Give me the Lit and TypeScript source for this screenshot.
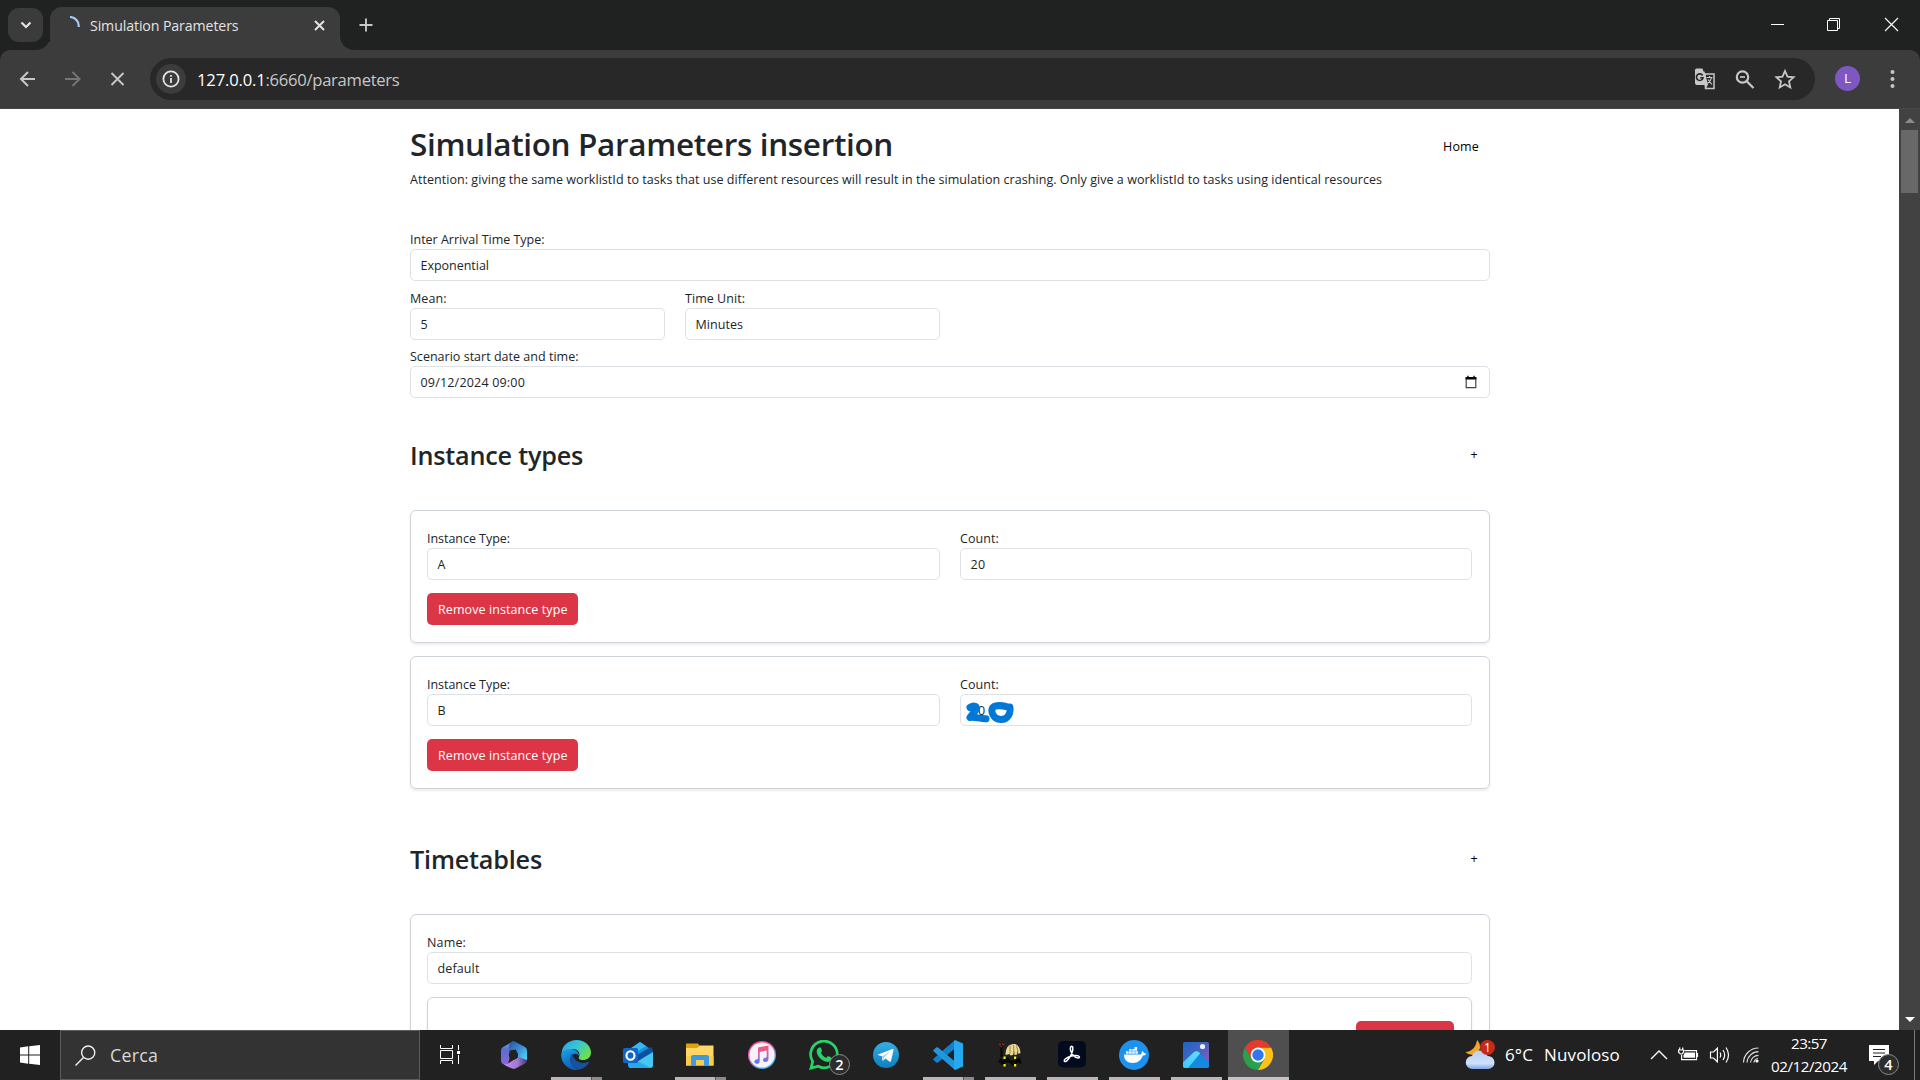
import { LitElement, html, css, svg, nothing } from "lit";
import { customElement, property } from "lit/decorators.js";

/** Tracks its text so that the run occupies exactly `w` pixels. */
@customElement("fit-text")
class FitText extends LitElement {
  @property({ type: Number }) w = 0;
  static styles = css`
    :host { display: inline-block; white-space: pre; }
  `;
  firstUpdated() {
    const range = document.createRange();
    range.selectNodeContents(this);
    const natural = range.getBoundingClientRect().width;
    const count = (this.textContent ?? "").length;
    if (this.w && count > 0) {
      this.style.letterSpacing = `${(this.w - natural) / count}px`;
    }
  }
  render() {
    return html`<slot></slot>`;
  }
}

const base = css`
  :host {
    display: block;
    box-sizing: border-box;
    font-family: "Open Sans", "Noto Sans", sans-serif;
  }
  * { box-sizing: border-box; }
  svg { display: block; flex: none; }
`;

@customElement("browser-chrome")
class BrowserChrome extends LitElement {
  static styles = [
    base,
    css`
      .strip {
        height: 50px;
        background: #202221;
        display: flex;
        padding-left: 8px;
        color: #e3e3e3;
      }
      .search-tabs {
        width: 35px;
        height: 34px;
        margin-top: 8px;
        border-radius: 11px;
        background: #3b3b3b;
        display: grid;
        place-items: center;
      }
      .tab {
        position: relative;
        margin: 7px 0 0 7px;
        width: 290px;
        height: 43px;
        border-radius: 12px 12px 0 0;
        background: #3c3c3c;
        display: flex;
        align-items: center;
        padding: 0 15px 6px 14px;
      }
      .tab::before,
      .tab::after {
        content: "";
        position: absolute;
        bottom: 0;
        width: 14px;
        height: 14px;
      }
      .tab::before {
        left: -14px;
        width: 14px;
        height: 8px;
        background: radial-gradient(circle at 0 -6px, #202221 13.5px, #3c3c3c 14.5px);
      }
      .tab::after {
        right: -14px;
        background: radial-gradient(circle at 100% 0, #202221 13.5px, #3c3c3c 14.5px);
      }
      .title { flex: 1; margin: 1px 0 0 6px; font-size: 14.2px; line-height: 24px; }
      .new-tab { margin: 18px 0 0 19px; }
      .window { margin-left: auto; display: flex; margin-top: 17px; padding-right: 21px; gap: 42px; }
      .bar {
        height: 59px;
        background: #202221;
      }
      .toolbar {
        height: 59px;
        background: #3c3c3c;
        border-bottom: 1px solid #474747;
        border-radius: 10px 10px 0 0;
        display: flex;
        align-items: center;
        padding: 0 17px 1px 18px;
        color: #c7c7c7;
      }
      .nav { display: flex; gap: 25px; width: 132px; }
      .omnibox {
        width: 1665px;
        height: 42px;
        border-radius: 21px;
        background: #282828;
        display: flex;
        align-items: center;
        padding: 0 19px 0 6px;
      }
      .info {
        width: 30px;
        height: 30px;
        border-radius: 50%;
        background: #3c3c3c;
        display: grid;
        place-items: center;
      }
      .url { margin: 2px 0 0 11px; flex: 1; font-size: 16.6px; line-height: 26px; color: #c7c7c7; }
      .host { color: #fff; }
      .actions { display: flex; gap: 18px; align-items: center; }
      .avatar {
        width: 25px;
        height: 25px;
        border-radius: 50%;
        margin-left: 20px;
        background: #7e57c2;
        color: #fff;
        font-size: 13.5px;
        line-height: 25px;
        text-align: center;
      }
      .menu { margin-left: auto; }
    `,
  ];
  render() {
    return html`
      <div class="strip">
        <div class="search-tabs">
          <svg width="12" height="8" viewBox="0 0 12 8" fill="none" stroke="#e3e3e3" stroke-width="2.2"><path d="M1.5 1.5 6 6l4.500-4.500" /></svg>
        </div>
        <div class="tab">
          <svg width="20" height="20" viewBox="0 0 20 20" fill="none" stroke="#a8c7fa" stroke-width="2.200"><path d="M6 1A9 9 0 0 1 14.700 11" /></svg>
          <div class="title"><fit-text w="148.500">Simulation Parameters</fit-text></div>
          <svg width="11" height="11" viewBox="0 0 11 11" stroke="#e3e3e3" stroke-width="2"><path d="M1 1l9 9M10 1l-9 9" /></svg>
        </div>
        <svg class="new-tab" width="14" height="14" viewBox="0 0 14 14" stroke="#c7c7c7" stroke-width="1.900"><path d="M7 .5v13M.5 7h13" /></svg>
        <div class="window">
          <svg width="15" height="15" viewBox="0 0 15 15" stroke="#fff"><path d="M1 7.500h13" /></svg>
          <svg width="15" height="15" viewBox="0 0 15 15" stroke="#fff" fill="none"><path d="M.5 3.500h10v10h-10zM2.500 3.500v-2h10v10h-2" /></svg>
          <svg width="15" height="15" viewBox="0 0 15 15" stroke="#fff" stroke-width="1.100"><path d="M1 1l13 13M14 1 1 14" /></svg>
        </div>
      </div>
      <div class="bar">
        <div class="toolbar">
          <div class="nav">
            <svg width="20" height="20" viewBox="0 0 20 20" fill="none" stroke="#c7c7c7" stroke-width="2"><path d="M17 10H3.500M10 3 3 10l7 7" /></svg>
            <svg width="20" height="20" viewBox="0 0 20 20" fill="none" stroke="#757575" stroke-width="2"><path d="M2 10h13.500M9.500 3l7 7-7 7" /></svg>
            <svg width="20" height="20" viewBox="0 0 20 20" fill="none" stroke="#c7c7c7" stroke-width="1.900"><path d="M3.500 4l12 12M15.500 4l-12 12" /></svg>
          </div>
          <div class="omnibox">
            <div class="info">
              <svg width="18" height="18" viewBox="0 0 18 18" fill="none" stroke="#e3e3e3" stroke-width="1.800"><circle cx="9" cy="9" r="7.600" /><path d="M9 8v5M9 5v1.800" /></svg>
            </div>
            <div class="url"><fit-text class="host" w="68.500">127.0.0.1</fit-text><fit-text w="134">:6660/parameters</fit-text></div>
            <div class="actions">
              <svg width="22" height="22" viewBox="0 0 22 22">
                <path d="M11 6h9v14.500h-8.500z" fill="none" stroke="#c7c7c7" stroke-width="1.500" />
                <path d="M2.500 .5h6l1 3h1l3.500 13-2 4-1.500-3.500h-8a2 2 0 0 1-1.500-2v-13A2 2 0 0 1 2.500 .5z" fill="#c7c7c7" />
                <path d="M8.600 7.500A3.300 3.300 0 1 0 9 9.800H6.200" fill="none" stroke="#282828" stroke-width="1.600" />
                <path d="M12.500 9.500h6M15.500 8v1.500M17.500 9.500c-.5 3-2.500 5-4 6M14 11.500l4 5" fill="none" stroke="#c7c7c7" stroke-width="1.200" />
              </svg>
              <svg width="22" height="22" viewBox="0 0 22 22" fill="none" stroke="#c7c7c7" stroke-width="2.200"><circle cx="8.500" cy="9" r="5.700" /><path d="M12.500 13l7 7" /><path d="M6 9h5" stroke-width="1.700" /></svg>
              <svg width="22" height="22" viewBox="0 0 22 22" fill="none" stroke="#c7c7c7" stroke-width="1.800"><path d="M11 3l2.500 5.700 6.100.6-4.600 4.100 1.300 6L11 16.200l-5.300 3.200 1.300-6-4.600-4.100 6.100-.6z" /></svg>
            </div>
          </div>
          <div class="avatar">L</div>
          <svg class="menu" width="20" height="20" viewBox="0 0 20 20" fill="#c7c7c7"><circle cx="9.500" cy="3" r="2" /><circle cx="9.500" cy="10" r="2" /><circle cx="9.500" cy="17" r="2" /></svg>
        </div>
      </div>
    `;
  }
}

@customElement("form-field")
class FormField extends LitElement {
  @property() label = "";
  @property() value = "";
  @property({ type: Number }) lw = 0;
  @property({ type: Number }) vw = 0;
  @property({ type: Boolean }) date = false;
  @property({ type: Boolean }) scribble = false;
  static styles = [
    base,
    css`
      .label { display: block; height: 20px; padding-top: 1px; font-size: 12.500px; line-height: 20px; color: #212529; }
      .control {
        position: relative;
        height: 32px;
        border: 1px solid #dee2e6;
        border-radius: 5px;
        background: #fff;
        padding: 0 12px 0 9.500px;
        display: flex;
        align-items: center;
        justify-content: space-between;
        font-size: 12.500px;
        line-height: 28px;
        color: #212529;
      }
      fit-text { padding-top: 2px; }
      .label fit-text { padding-top: 0; }
      .scribble { position: absolute; left: 4px; top: 6px; }
    `,
  ];
  render() {
    return html`
      <div class="label"><fit-text .w=${this.lw}>${this.label}</fit-text></div>
      <div class="control">
        <fit-text .w=${this.vw}>${this.value}</fit-text>
        ${this.date
          ? html`<svg width="12" height="14" viewBox="0 0 12 14"><path d="M1.200 3h9.600v9.600H1.200z" fill="none" stroke="#444" stroke-width="1.200" /><path d="M.6 2h10.800v2.600H.6zM2.200.8h1.400V3H2.200zM8.400.8h1.400V3H8.400z" /></svg>`
          : nothing}
        ${this.scribble
          ? html`<svg class="scribble" width="52" height="24" viewBox="0 0 52 24" fill="none" stroke="#0078d7" stroke-width="7" stroke-linecap="round" stroke-linejoin="round">
              <path d="M5 6.500C8 4.500 12 4.500 11.500 7.500S8 12 5 16.500C9 15.500 14 17.500 21 17.800" />
              <path d="M41 5.500C36 4.300 30 4.500 27.800 6.500C25.500 10 28 18.500 35.500 18.500C43 18.800 46 12 44.800 6" />
            </svg>`
          : nothing}
      </div>
    `;
  }
}

interface InstanceType {
  name: string;
  nameWidth: number;
  scribble: boolean;
}

@customElement("parameters-page")
class ParametersPage extends LitElement {
  private instances: InstanceType[] = [
    { name: "A", nameWidth: 8.600, scribble: false },
    { name: "B", nameWidth: 7.600, scribble: true },
  ];
  static styles = [
    base,
    css`
      :host { background: #fff; color: #212529; overflow: hidden; }
      .viewport { display: flex; height: 921px; overflow: hidden; }
      .scroll { flex: 1; overflow: hidden; }
      .container { width: 1080px; margin-left: 410px; padding-top: 15px; }
      .head { display: flex; justify-content: space-between; height: 46px; }
      h1, h2, p { margin: 0; }
      h1 { font-size: 31.500px; font-weight: 600; line-height: 40px; }
      h2 { font-size: 25.200px; font-weight: 600; line-height: 32px; }
      .home { margin: 13px 11px 0 0; font-size: 12.500px; line-height: 20px; color: #000; }
      p { font-size: 12.500px; line-height: 20px; }
      .arrival { margin-top: 39px; }
      .quarter { display: grid; grid-template-columns: repeat(4, 1fr); column-gap: 20px; margin: 7px 0 6px; }
      .section { display: flex; justify-content: space-between; height: 32px; margin: 41px 0 39px; }
      .section.later { margin-top: 54px; }
      .plus { margin: 6px 11.500px 0 0; width: 8px; font-size: 12.500px; line-height: 20px; color: #000; }
      .card {
        border: 1px solid #ced4da;
        border-radius: 6px;
        padding: 17px 17px 17px 16px;
        box-shadow: 0 2px 3px rgba(0, 0, 0, 0.075);
      }
      .card + .card { margin-top: 13px; }
      .halves { display: grid; grid-template-columns: 513px 512px; column-gap: 20px; margin-bottom: 13px; }
      .danger {
        display: inline-flex;
        align-items: center;
        height: 32px;
        width: 151px;
        padding-left: 11px;
        border-radius: 5px;
        background: #dc3545;
        color: #fff;
        font-size: 12.500px;
      }
      .inner { margin-top: 13px; height: 200px; padding: 23px 17px; display: flex; justify-content: flex-end; }
      .inner .danger { width: 98px; }
      .track { width: 21px; background: #424242; display: flex; flex-direction: column; align-items: center; padding: 9px 0 8px; }
      .thumb { width: 17px; height: 63px; background: #686868; margin: 7px 0 auto; }
    `,
  ];
  render() {
    return html`
      <div class="viewport">
        <div class="scroll">
          <div class="container">
            <div class="head">
              <h1><fit-text w="483">Simulation Parameters insertion</fit-text></h1>
              <div class="home"><fit-text w="36">Home</fit-text></div>
            </div>
            <p><fit-text w="972">Attention: giving the same worklistId to tasks that use different resources will result in the simulation crashing. Only give a worklistId to tasks using identical resources</fit-text></p>
            <form-field class="arrival" label="Inter Arrival Time Type:" lw="134.500" value="Exponential" vw="68.500"></form-field>
            <div class="quarter">
              <form-field label="Mean:" lw="36.500" value="5" vw="7.200"></form-field>
              <form-field label="Time Unit:" lw="60" value="Minutes" vw="47.500"></form-field>
            </div>
            <form-field date label="Scenario start date and time:" lw="168.500" value="09/12/2024 09:00" vw="104.500"></form-field>
            <div class="section">
              <h2><fit-text w="173">Instance types</fit-text></h2>
              <div class="plus">+</div>
            </div>
            ${this.instances.map(
              (item) => html`
                <div class="card">
                  <div class="halves">
                    <form-field label="Instance Type:" lw="83" .value=${item.name} .vw=${item.nameWidth}></form-field>
                    <form-field label="Count:" lw="39" value="20" vw="14.800" .scribble=${item.scribble}></form-field>
                  </div>
                  <div class="danger"><fit-text w="129.500">Remove instance type</fit-text></div>
                </div>
              `
            )}
            <div class="section later">
              <h2><fit-text w="132">Timetables</fit-text></h2>
              <div class="plus">+</div>
            </div>
            <div class="card">
              <form-field label="Name:" lw="39" value="default" vw="42"></form-field>
              <div class="card inner"><div class="danger"></div></div>
            </div>
          </div>
        </div>
        <div class="track">
          <svg width="10" height="5" viewBox="0 0 10 5" fill="#8b8b8b"><path d="M0 5 5 0l5 5z" /></svg>
          <div class="thumb"></div>
          <svg width="10" height="5" viewBox="0 0 10 5" fill="#fff"><path d="M0 0h10L5 5z" /></svg>
        </div>
      </div>
    `;
  }
}

type AppState = "idle" | "open" | "stacked" | "active";

const apps: { state: AppState; badge?: string; art: unknown }[] = [
  {
    state: "idle",
    art: svg`
      <defs>
        <linearGradient id="m1" x1="0" y1="0" x2="0" y2="1"><stop offset="0" stop-color="#6fb0ea"/><stop offset=".35" stop-color="#5a6fd0"/><stop offset="1" stop-color="#8a68d8"/></linearGradient>
        <linearGradient id="m2" x1="0" y1="0" x2="1" y2="1"><stop offset="0" stop-color="#2a4f9c"/><stop offset=".5" stop-color="#3a8fd8"/><stop offset="1" stop-color="#4fe0fa"/></linearGradient>
        <linearGradient id="m3" x1="0" y1="0" x2="1" y2="0"><stop offset="0" stop-color="#c78af0"/><stop offset=".6" stop-color="#a07ad0"/><stop offset="1" stop-color="#4a3478"/></linearGradient>
      </defs>
      <path d="M14 1.500 4 7A4 4 0 0 0 2 10.500v10A4 4 0 0 0 4 24l3 1c2-2 3.500-4 3.500-7v-6c0-2 1-4 4-5z" fill="url(#m1)"/>
      <path d="M13 1.500c-4 3-4 6-2 9l6-1 2 8 9 3V10.500A4 4 0 0 0 26 7L16.500 2A4 4 0 0 0 13 1.500z" fill="url(#m2)"/>
      <path d="M4.500 24.500 13 28.600a5 5 0 0 0 3.500-.2L26 23.500a4 4 0 0 0 2-3.500L19.500 17 14.500 20c-3 2-6 4-10 4.500z" fill="url(#m3)"/>
      <circle cx="14.500" cy="15" r="4.600" fill="#222"/>`,
  },
  {
    state: "stacked",
    art: svg`
      <defs>
        <linearGradient id="e1" x1="0" y1="0" x2="1" y2=".6"><stop offset="0" stop-color="#2c9fe0"/><stop offset=".5" stop-color="#35c5d8"/><stop offset="1" stop-color="#6be24a"/></linearGradient>
        <linearGradient id="e2" x1="0" y1="0" x2=".4" y2="1"><stop offset="0" stop-color="#1fa4e8"/><stop offset="1" stop-color="#0c5db5"/></linearGradient>
      </defs>
      <path d="M.5 13C1.500 5 8 0 15.500 0 24 0 30 6 30 12.500c0 5-4 7.500-8 7.500-3.500 0-5-1.500-4-3 2-5-2-8-6-8S3 10 .5 13z" fill="url(#e1)"/>
      <path d="M.2 14C2 9.500 6 8.500 10.500 9c4 .5 8 3 7.500 7-2-3-6-3-8 1-2 5 2 12 9 12.500A15 15 0 0 1 .2 14z" fill="url(#e2)"/>
      <path d="M11 13.500C7 18 9.500 28 18 29.500c4-.5 8-3 10-7 .3-.7-.3-1-1-.6C20 25 13 21 11 13.500z" fill="#15529f"/>`,
  },
  {
    state: "idle",
    art: svg`
      <path d="M5 11 17 2l12 8v4L15 22z" fill="#1490df"/>
      <path d="M8 8l9-6 6 4-12 8z" fill="#35b8f1"/>
      <path d="M12 16 28 7l2 3v4L14 24z" fill="#0b4fa0"/>
      <path d="M30 12v13a3 3 0 0 1-3 3H8a3 3 0 0 1-2-1l14-9z" fill="#45c8f2"/>
      <path d="M12 20l16 8H8a3 3 0 0 1-3-3v-3z" fill="#2aa9e8"/>
      <rect x="0" y="8" width="15" height="15" rx="1.500" fill="#1066c0"/>
      <ellipse cx="7.500" cy="15.500" rx="4" ry="4.300" fill="none" stroke="#fff" stroke-width="2.100"/>`,
  },
  {
    state: "stacked",
    art: svg`
      <path d="M1 3.500h12l2 2.500-3 3H1z" fill="#e2a00c"/>
      <path d="M1 8h11l3-2.500h13.500v20H1z" fill="#ffd766"/>
      <path d="M1 16h27.500v9.500H1z" fill="#fbcb4c"/>
      <path d="M6 26V17a2 2 0 0 1 2-2h14a2 2 0 0 1 2 2v9h-5v-6h-8v6z" fill="#3d9ae0"/>`,
  },
  {
    state: "idle",
    art: svg`
      <defs>
        <linearGradient id="i1" x1="0" y1="0" x2=".6" y2="1"><stop offset="0" stop-color="#f8406a"/><stop offset=".5" stop-color="#e95ab8"/><stop offset="1" stop-color="#36b8f5"/></linearGradient>
        <linearGradient id="i2" x1="0" y1="0" x2="0" y2="1"><stop offset="0" stop-color="#fc5a62"/><stop offset=".5" stop-color="#d65ac8"/><stop offset="1" stop-color="#3b86f2"/></linearGradient>
      </defs>
      <circle cx="15" cy="15" r="14" fill="url(#i1)"/><circle cx="15" cy="15" r="12.600" fill="#f4f4f8"/>
      <path d="M11 7.500 21.500 5.500v13.500c0 2-1.500 3-3.200 3-3 0-3.300-3.500-.3-4.200 1.500-.3 1.700-.8 1.700-1.600V10.500l-7 1.500v9c0 2-1.500 2.800-3 2.800-3 0-3.200-3.500-.4-4.200 1.500-.3 1.700-.8 1.700-1.600z" fill="url(#i2)"/>`,
  },
  {
    state: "idle",
    badge: "2",
    art: svg`
      <path d="M2 28.200 3.700 21.500A13.300 13.300 0 1 1 9 26.300z" fill="none" stroke="#25d366" stroke-width="2.700"/>
      <path d="M9.500 8c1.500-1.300 2.500-.5 3 1.200.8 2 .7 2-.6 3.500 1.200 2.400 2.800 4 5.300 5.100 1.300-1.700 1.700-2 3-1.300 2.500 1.200 2.800 1.300 2.200 3-.8 2-3 2.700-5 2.300C12 20.500 8.500 16 7.800 12.500 7.500 10.500 8 9 9.500 8z" fill="#25d366"/>`,
  },
  {
    state: "idle",
    art: svg`
      <defs><linearGradient id="t1" x1="0" y1="0" x2="0" y2="1"><stop offset="0" stop-color="#37aee2"/><stop offset="1" stop-color="#0d7fc0"/></linearGradient></defs>
      <circle cx="15" cy="15" r="13" fill="url(#t1)"/>
      <path d="M6.500 14.800 21.500 9c.8-.3 1.200.2 1 1L20 21c-.2.900-.8 1-1.500.6l-4-3-2.200 2-.8.2-.5-4.500-4-1.200z" fill="#fff"/>
      <path d="M11 16.500 19 11.500 13 17.500l-.5 3z" fill="#a8cfe8"/>`,
  },
  {
    state: "stacked",
    art: svg`
      <path d="M22 0v8.500L5 22.500c-.5.400-1.200.4-1.700 0L.7 20.300c-.6-.6-.6-1.300 0-1.900z" fill="#1180c8"/>
      <path d="M.7 9.700 3.300 7.500c.5-.4 1.200-.4 1.700 0L22 21.500V30L.7 11.600c-.6-.6-.6-1.300 0-1.900z" fill="#2196dc"/>
      <path d="M22 0 30 3.500v23L22 30l-1-1.500v-27z" fill="#27a9f0"/>`,
  },
  {
    state: "open",
    art: svg`
      <path d="M6.500 4v13" stroke="#080808" stroke-width="2.200" fill="none"/>
      <path d="M4 4.500h2M7 4.500h2.500M5.500 6.500h1.500" stroke="#8f2a20" stroke-width="1.300"/>
      <path d="M10.500 15c0-6 2-10 6-10.500 5-1.500 8.500 1 9 8.500l-2 1-1-4-.3 4.500-2.700.5-.5-4.500-.8 4.500-2.700.5-1-1.500z" fill="#ead994"/>
      <path d="M15 5.500v8M18.500 5l.5 8M21.500 5.500l1.500 6" stroke="#9b7e43" stroke-width=".9"/>
      <path d="M3.500 21.500h23M5 18.500l5 6.500M21 18.500l5 5M12 17.500l-6 7M25 18l-6 8M12 18l6 7" stroke="#050505" stroke-width="2"/>
      <path d="M8.500 16.500h2.200v2.500H8.500zM19 16.500h2.200v2.500H19zM8.500 24h2.200v2.500H8.500zM19 24h2.200v2.500H19z" fill="#f4ec1c"/>`,
  },
  {
    state: "open",
    art: svg`
      <rect x="1" y="1" width="28" height="26.500" rx="5" fill="#020b1d"/>
      <path d="M14.200 6.500c2-.8 2 2.500 1 5.500-1.500 4-4 8-6 9.300-1.800 1-2.800-.8-1-2.300 3-2.300 7.500-3.500 11-3.500 3.700 0 4 2.500 2 2.600-3 .1-7-4.500-7.700-8-.3-2-.2-3.300.7-3.600z" fill="none" stroke="#fff" stroke-width="1.500"/>`,
  },
  {
    state: "open",
    art: svg`
      <circle cx="15" cy="15" r="15" fill="#1d91ee"/>
      <path d="M5 14.500h17c.6-.8.6-2.500 1.300-3.500 1 .5 1.500 1.400 1.500 2.300 1 0 1.800.1 2.300.5-.7 1.300-1.800 1.800-3.300 1.800-1.800 5-5 7.400-9.800 7.400-6 0-9-3-9-8.500z" fill="#fff"/>
      <path d="M7 11.200h2.600v2.600H7zM10.100 11.200h2.600v2.600h-2.600zM13.200 11.200h2.600v2.600h-2.600zM16.300 11.200h2.600v2.600h-2.600zM10.100 9h2.600v1.700h-2.600zM13.200 9h2.600v1.700h-2.600zM15.500 7h2.600v3.700h-2.600z" fill="#fff" opacity=".92"/>`,
  },
  {
    state: "open",
    art: svg`
      <defs>
        <linearGradient id="p1" x1="0" y1="0" x2="1" y2="1"><stop offset="0" stop-color="#1867c8"/><stop offset=".5" stop-color="#4a62c0"/><stop offset="1" stop-color="#b050b0"/></linearGradient>
        <linearGradient id="p2" x1="0" y1="1" x2="1" y2="0"><stop offset="0" stop-color="#3cc8f8"/><stop offset="1" stop-color="#62e0fc"/></linearGradient>
      </defs>
      <rect x="2" y="2" width="26" height="26" rx="2" fill="url(#p1)"/>
      <path d="M7 28 16.500 13.500 18.500 12.800 28 22v4a2 2 0 0 1-2 2z" fill="#1489e0"/>
      <path d="M2 22.500 12.500 12.500c1.800-1.700 4-1.700 5.800 0L19 13.500 7 28H4a2 2 0 0 1-2-2z" fill="url(#p2)"/>
      <circle cx="21.500" cy="6.500" r="2.600" fill="#eaf2fb"/>`,
  },
  {
    state: "active",
    art: svg`
      <path d="M15 15V7.500h13A15 15 0 0 1 14.800 30l6.700-11.300z" fill="#fcc21b"/>
      <path d="M2 7.500A15 15 0 0 1 28 7.500H15l-6.500 11.300z" fill="#e33b2e"/>
      <path d="M2 7.500 8.500 18.800 15 22.500l6.500-3.800L14.800 30A15 15 0 0 1 2 7.500z" fill="#2aa04a"/>
      <circle cx="15" cy="15" r="7.400" fill="#fff"/><circle cx="15" cy="15" r="5.700" fill="#2f78ec"/>`,
  },
];

@customElement("task-bar")
class TaskBar extends LitElement {
  static styles = [
    base,
    css`
      :host { height: 50px; background: #212121; color: #fff; }
      .row { display: flex; height: 50px; }
      .start { width: 60px; display: grid; place-items: center; }
      .search {
        width: 360px;
        border: 1px solid #5c5c5c;
        background: #333;
        display: flex;
        align-items: center;
        padding-left: 14px;
        gap: 14px;
        color: #d8d8d8;
        font-size: 17.800px;
      }
      .view { width: 63px; padding: 15px 0 0 20px; }
      .app { position: relative; width: 62px; padding: 10px 16px; }
      .app.active { background: #4f4f4f; width: 61px; margin-left: 1px; padding-left: 15px; }
      .line { position: absolute; left: 6px; bottom: 0; width: 51px; height: 3px; background: #b9b5b8; }
      .active .line { left: 0; width: 61px; background: #c6c2c5; }
      .stacked .line { background: linear-gradient(90deg, #b9b5b8 40px, #555 40px, #555 41px, #8d898c 41px); }
      .badge {
        position: absolute;
        left: 36px;
        top: 24px;
        width: 21px;
        height: 21px;
        border-radius: 50%;
        border: 1px solid #8b8b8b;
        background: #2d2d2d;
        font-size: 14.500px;
        font-weight: 600;
        line-height: 19px;
        text-align: center;
      }
      .tray { margin-left: auto; display: flex; align-items: center; height: 50px; }
      .weather { font-size: 17px; line-height: 24px; display: flex; gap: 11px; margin-left: 9px; }
      .glyphs { display: flex; align-items: center; gap: 10px; margin-left: 30px; width: 123px; }
      .clock { width: 80px; text-align: center; font-size: 15.200px; line-height: 23px; margin-left: -4px; }
      .notes { position: relative; width: 50px; height: 50px; margin-left: 20px; padding-top: 15px; }
      .notes .badge { left: 9px; }
      .edge { height: 50px; width: 6px; border-left: 1px solid #7a7a7a; margin-left: -5px; }
    `,
  ];
  render() {
    return html`
      <div class="row">
        <div class="start">
          <svg width="20" height="20" viewBox="0 0 20 20" fill="#fff"><path d="M0 2.500 8.200 1.300V9.500H0zM9.200 1.200 20 0v9.500H9.200zM0 10.500h8.200v8.200L0 17.500zM9.200 10.500H20V20L9.200 18.800z" /></svg>
        </div>
        <div class="search">
          <svg width="21" height="21" viewBox="0 0 21 21" fill="none" stroke="#f0f0f0" stroke-width="1.400"><circle cx="13.200" cy="7.600" r="6.600" /><path d="M8.500 12.400.5 20.400" /></svg>
          <fit-text w="48">Cerca</fit-text>
        </div>
        <div class="view">
          <svg width="20" height="20" viewBox="0 0 20 20" fill="none" stroke="#fff"><path d="M.5 0v3.500h12V0M.5 19v-3.500h12V19M.5 5.500h12v8H.5zM18.500 0v5M18.500 10v9" /><path d="M17 6h3v3h-3z" fill="#fff" stroke="none" /></svg>
        </div>
        ${apps.map(
          (app) => html`
            <div class="app ${app.state}">
              <svg width="30" height="30" viewBox="0 0 30 30">${app.art}</svg>
              ${app.state === "idle" ? nothing : html`<div class="line"></div>`}
              ${app.badge ? html`<div class="badge">${app.badge}</div>` : nothing}
            </div>
          `
        )}
        <div class="tray">
          <svg width="31" height="32" viewBox="0 0 31 32">
            <defs><linearGradient id="c" x1="0" y1="0" x2="0" y2="1"><stop offset="0" stop-color="#b9d0f5" /><stop offset=".7" stop-color="#cfe0fa" /><stop offset="1" stop-color="#7fa6ea" /></linearGradient></defs>
            <path d="M12 1c4 4 4 10 0 13-3 2.500-8 2.500-11.500-1C7 12.500 11 8 12 1z" fill="#f5a623" />
            <path d="M7.500 30a6.500 6.500 0 0 1-.5-13A8.200 8.200 0 0 1 22.500 17a6.500 6.500 0 0 1 1 13z" fill="url(#c)" />
            <circle cx="22.500" cy="8.500" r="7.500" fill="#c42b1c" />
            <text x="22.500" y="13" font-size="12" fill="#fff" text-anchor="middle">1</text>
          </svg>
          <div class="weather"><fit-text w="28">6°C</fit-text><fit-text w="76">Nuvoloso</fit-text></div>
          <div class="glyphs">
            <svg width="18" height="20" viewBox="0 0 18 20" fill="none" stroke="#fff" stroke-width="1.400"><path d="M1 14l8-8 8 8" /></svg>
            <svg width="21" height="20" viewBox="0 0 21 20" fill="none" stroke="#fff" stroke-width="1.200"><path d="M6.500 5.600h12v9H3.600V10" /><path d="M7 7.500h10v5.200H5.500V10z" fill="#fff" stroke="none" /><path d="M19.500 8v4M1.700 2.500V5M4.700 2.500V5M.6 5h5v2.200L4 9H2.400L.6 7.200z" /></svg>
            <svg width="22" height="20" viewBox="0 0 22 20" fill="none" stroke="#fff" stroke-width="1.200"><path d="M1.500 7h3L8.400 3.200v13.600L4.500 13h-3zM11 7.500q1.500 2.500 0 5M14 5q3.300 5 0 10M17 2.500q5 7.500 0 15" /></svg>
            <svg width="20" height="20" viewBox="0 0 20 20" fill="none" stroke="#ddd" stroke-width="1.200"><path d="M2.500 17.500a15 15 0 0 1 15-14.500M6 17.500A11.500 11.500 0 0 1 17.500 6.700M9.500 17.500a8 8 0 0 1 8-7.200M13 17.500a4.600 4.600 0 0 1 4-4" /><circle cx="16" cy="16" r="1.600" fill="#fff" stroke="none" /></svg>
          </div>
          <div class="clock"><fit-text w="36">23:57</fit-text><fit-text w="76">02/12/2024</fit-text></div>
          <div class="notes">
            <svg width="20" height="20" viewBox="0 0 20 20"><path d="M0 0h20v16H9l-4 4v-4H0z" fill="#fff" /><path d="M4 4.500h12M4 8h12M4 11.500h8" stroke="#222" /></svg>
            <div class="badge">4</div>
          </div>
          <div class="edge"></div>
        </div>
      </div>
    `;
  }
}

@customElement("app-root")
class AppRoot extends LitElement {
  static styles = css`
    :host { display: flex; flex-direction: column; width: 1920px; height: 1080px; overflow: hidden; background: #fff; }
  `;
  render() {
    return html`
      <browser-chrome></browser-chrome>
      <parameters-page></parameters-page>
      <task-bar></task-bar>
    `;
  }
}
